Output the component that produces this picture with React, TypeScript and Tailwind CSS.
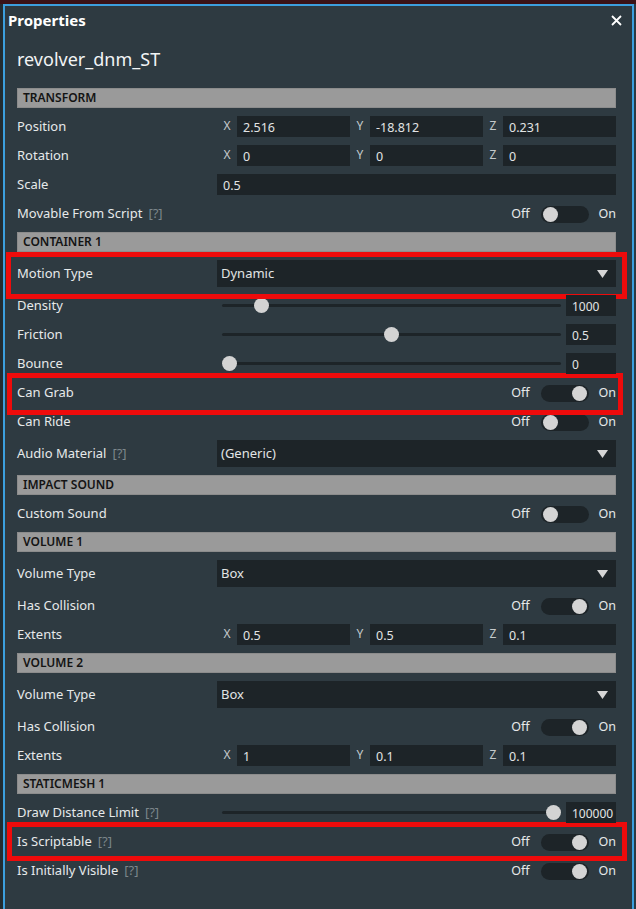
import React from 'react';

type Row =
  | { kind: 'header'; text: string }
  | { kind: 'xyz'; label: string; values: [string, string, string] }
  | { kind: 'input'; label: string; value: string }
  | { kind: 'toggle'; label: string; on: boolean; help?: boolean }
  | { kind: 'select'; label: string; value: string; help?: boolean }
  | { kind: 'slider'; label: string; frac: number; value: string; help?: boolean };

const rows: Row[] = [
  { kind: 'header', text: 'TRANSFORM' },
  { kind: 'xyz', label: 'Position', values: ['2.516', '-18.812', '0.231'] },
  { kind: 'xyz', label: 'Rotation', values: ['0', '0', '0'] },
  { kind: 'input', label: 'Scale', value: '0.5' },
  { kind: 'toggle', label: 'Movable From Script', on: false, help: true },
  { kind: 'header', text: 'CONTAINER 1' },
  { kind: 'select', label: 'Motion Type', value: 'Dynamic' },
  { kind: 'slider', label: 'Density', frac: 0.098, value: '1000' },
  { kind: 'slider', label: 'Friction', frac: 0.5, value: '0.5' },
  { kind: 'slider', label: 'Bounce', frac: 0, value: '0' },
  { kind: 'toggle', label: 'Can Grab', on: true },
  { kind: 'toggle', label: 'Can Ride', on: false },
  { kind: 'select', label: 'Audio Material', value: '(Generic)', help: true },
  { kind: 'header', text: 'IMPACT SOUND' },
  { kind: 'toggle', label: 'Custom Sound', on: false },
  { kind: 'header', text: 'VOLUME 1' },
  { kind: 'select', label: 'Volume Type', value: 'Box' },
  { kind: 'toggle', label: 'Has Collision', on: true },
  { kind: 'xyz', label: 'Extents', values: ['0.5', '0.5', '0.1'] },
  { kind: 'header', text: 'VOLUME 2' },
  { kind: 'select', label: 'Volume Type', value: 'Box' },
  { kind: 'toggle', label: 'Has Collision', on: true },
  { kind: 'xyz', label: 'Extents', values: ['1', '0.1', '0.1'] },
  { kind: 'header', text: 'STATICMESH 1' },
  { kind: 'slider', label: 'Draw Distance Limit', frac: 1, value: '100000', help: true },
  { kind: 'toggle', label: 'Is Scriptable', on: true, help: true },
  { kind: 'toggle', label: 'Is Initially Visible', on: true, help: true },
];

const Label = ({ text, help }: { text: string; help?: boolean }) => (
  <div className="w-[200px] shrink-0 text-[13px] text-[#e6e9ea] whitespace-nowrap">
    {text}
    {help && <span className="ml-[6px] text-[#7c868b]">[?]</span>}
  </div>
);

const Field = ({ value, className }: { value: string; className?: string }) => (
  <div
    className={`h-[21px] bg-[#1d2428] flex items-center pt-[3px] pl-[6px] text-[12.5px] text-[#e2e4e5] ${className ?? ''}`}
  >
    {value}
  </div>
);

const Toggle = ({ on }: { on: boolean }) => (
  <div className="flex flex-1 items-center justify-end pt-[1px] text-[12.5px] text-[#e6e9ea]">
    <span>Off</span>
    <div
      className={`ml-[11px] mr-[10px] w-[48px] h-[17px] rounded-full bg-[#1d2428] flex items-center px-[2px] ${on ? 'justify-end' : 'justify-start'}`}
    >
      <div className="w-[15px] h-[15px] rounded-full bg-[#d4d4d4]" />
    </div>
    <span>On</span>
  </div>
);

const Slider = ({ frac, value }: { frac: number; value: string }) => (
  <div className="flex flex-1 items-center pl-[5px]">
    <div className="relative flex-1 h-[15px] flex items-center">
      <div className="w-full h-[3px] bg-[#1d2428] rounded-full" />
      <div
        className="absolute top-0 w-[15px] h-[15px] rounded-full bg-[#d3d3d3]"
        style={{ left: `${frac * 324}px` }}
      />
    </div>
    <Field value={value} className="relative z-10 ml-[5px] w-[50px] !text-[12px]" />
  </div>
);

const Select = ({ value }: { value: string }) => (
  <div className="flex-1 h-[27px] bg-[#1d2428] flex items-center justify-between pl-[4px] pr-[8px] text-[13px] text-[#e2e4e5]">
    <span>{value}</span>
    <svg width="11" height="8" viewBox="0 0 11 8">
      <polygon points="0,0 11,0 5.5,8" fill="#d6d6d6" />
    </svg>
  </div>
);

const Xyz = ({ values }: { values: [string, string, string] }) => (
  <div className="flex flex-1">
    {(['X', 'Y', 'Z'] as const).map((axis, i) => (
      <div key={axis} className="flex flex-1 items-center">
        <span className="w-[20px] text-center text-[12px] text-[#c5cacc] -mt-[2px]">{axis}</span>
        <Field value={values[i]} className="flex-1" />
      </div>
    ))}
  </div>
);

const RowView = ({ row }: { row: Row }) => {
  if (row.kind === 'header') {
    return (
      <div className="h-[28px] flex items-center">
        <div className="h-[20px] w-full bg-[#9a9a9a] border border-[#8c8c8c] flex items-center pl-[5px] text-[12px] font-semibold text-[#141414]">
          {row.text}
        </div>
      </div>
    );
  }
  const tall = row.kind === 'select';
  return (
    <div className={`${tall ? 'h-[35px]' : 'h-[29px]'} flex items-center`}>
      <Label text={row.label} help={'help' in row ? row.help : undefined} />
      {row.kind === 'xyz' && <Xyz values={row.values} />}
      {row.kind === 'input' && <Field value={row.value} className="flex-1" />}
      {row.kind === 'toggle' && <Toggle on={row.on} />}
      {row.kind === 'select' && <Select value={row.value} />}
      {row.kind === 'slider' && <Slider frac={row.frac} value={row.value} />}
    </div>
  );
};

export default function App() {
  return (
    <div className="relative w-[636px] h-[909px] flex flex-col bg-[#222b30] font-['Noto_Sans',sans-serif] overflow-hidden">
      <div className="h-[4px] shrink-0 bg-[#3a1318]" />
      <div className="flex flex-1">
        <div className="w-[3px] shrink-0 bg-[#232c31]" />
        <div className="w-[631px] shrink-0 border-l-2 border-t-2 border-r-2 border-[#3c9fde] bg-[#2e3a41] flex flex-col">
          <div className="h-[28px] flex items-center justify-between pl-[3px] pr-[10px]">
            <span className="text-[15px] font-bold text-white">Properties</span>
            <svg width="11" height="11" viewBox="0 0 11 11">
              <path d="M1 1 L10 10 M10 1 L1 10" stroke="#ffffff" strokeWidth="1.8" />
            </svg>
          </div>
          <div className="h-[50px] flex items-center pl-[12px] text-[18px] text-[#f2f4f5]">
            revolver_dnm_ST
          </div>
          <div className="flex flex-col pl-[12px] pr-[16px]">
            {rows.map((row, i) => (
              <RowView key={i} row={row} />
            ))}
          </div>
        </div>
        <div className="w-[2px] shrink-0 bg-[#2b3a44]" />
      </div>

      {/* red annotation boxes */}
      <div className="absolute left-[6px] top-[252px] w-[621px] h-[47px] border-[5px] border-[#ee0b0b]" />
      <div className="absolute left-[7px] top-[373px] w-[616px] h-[42px] border-[5px] border-[#ee0b0b]" />
      <div className="absolute left-[7px] top-[822px] w-[620px] h-[39px] border-[5px] border-[#ee0b0b]" />
    </div>
  );
}
